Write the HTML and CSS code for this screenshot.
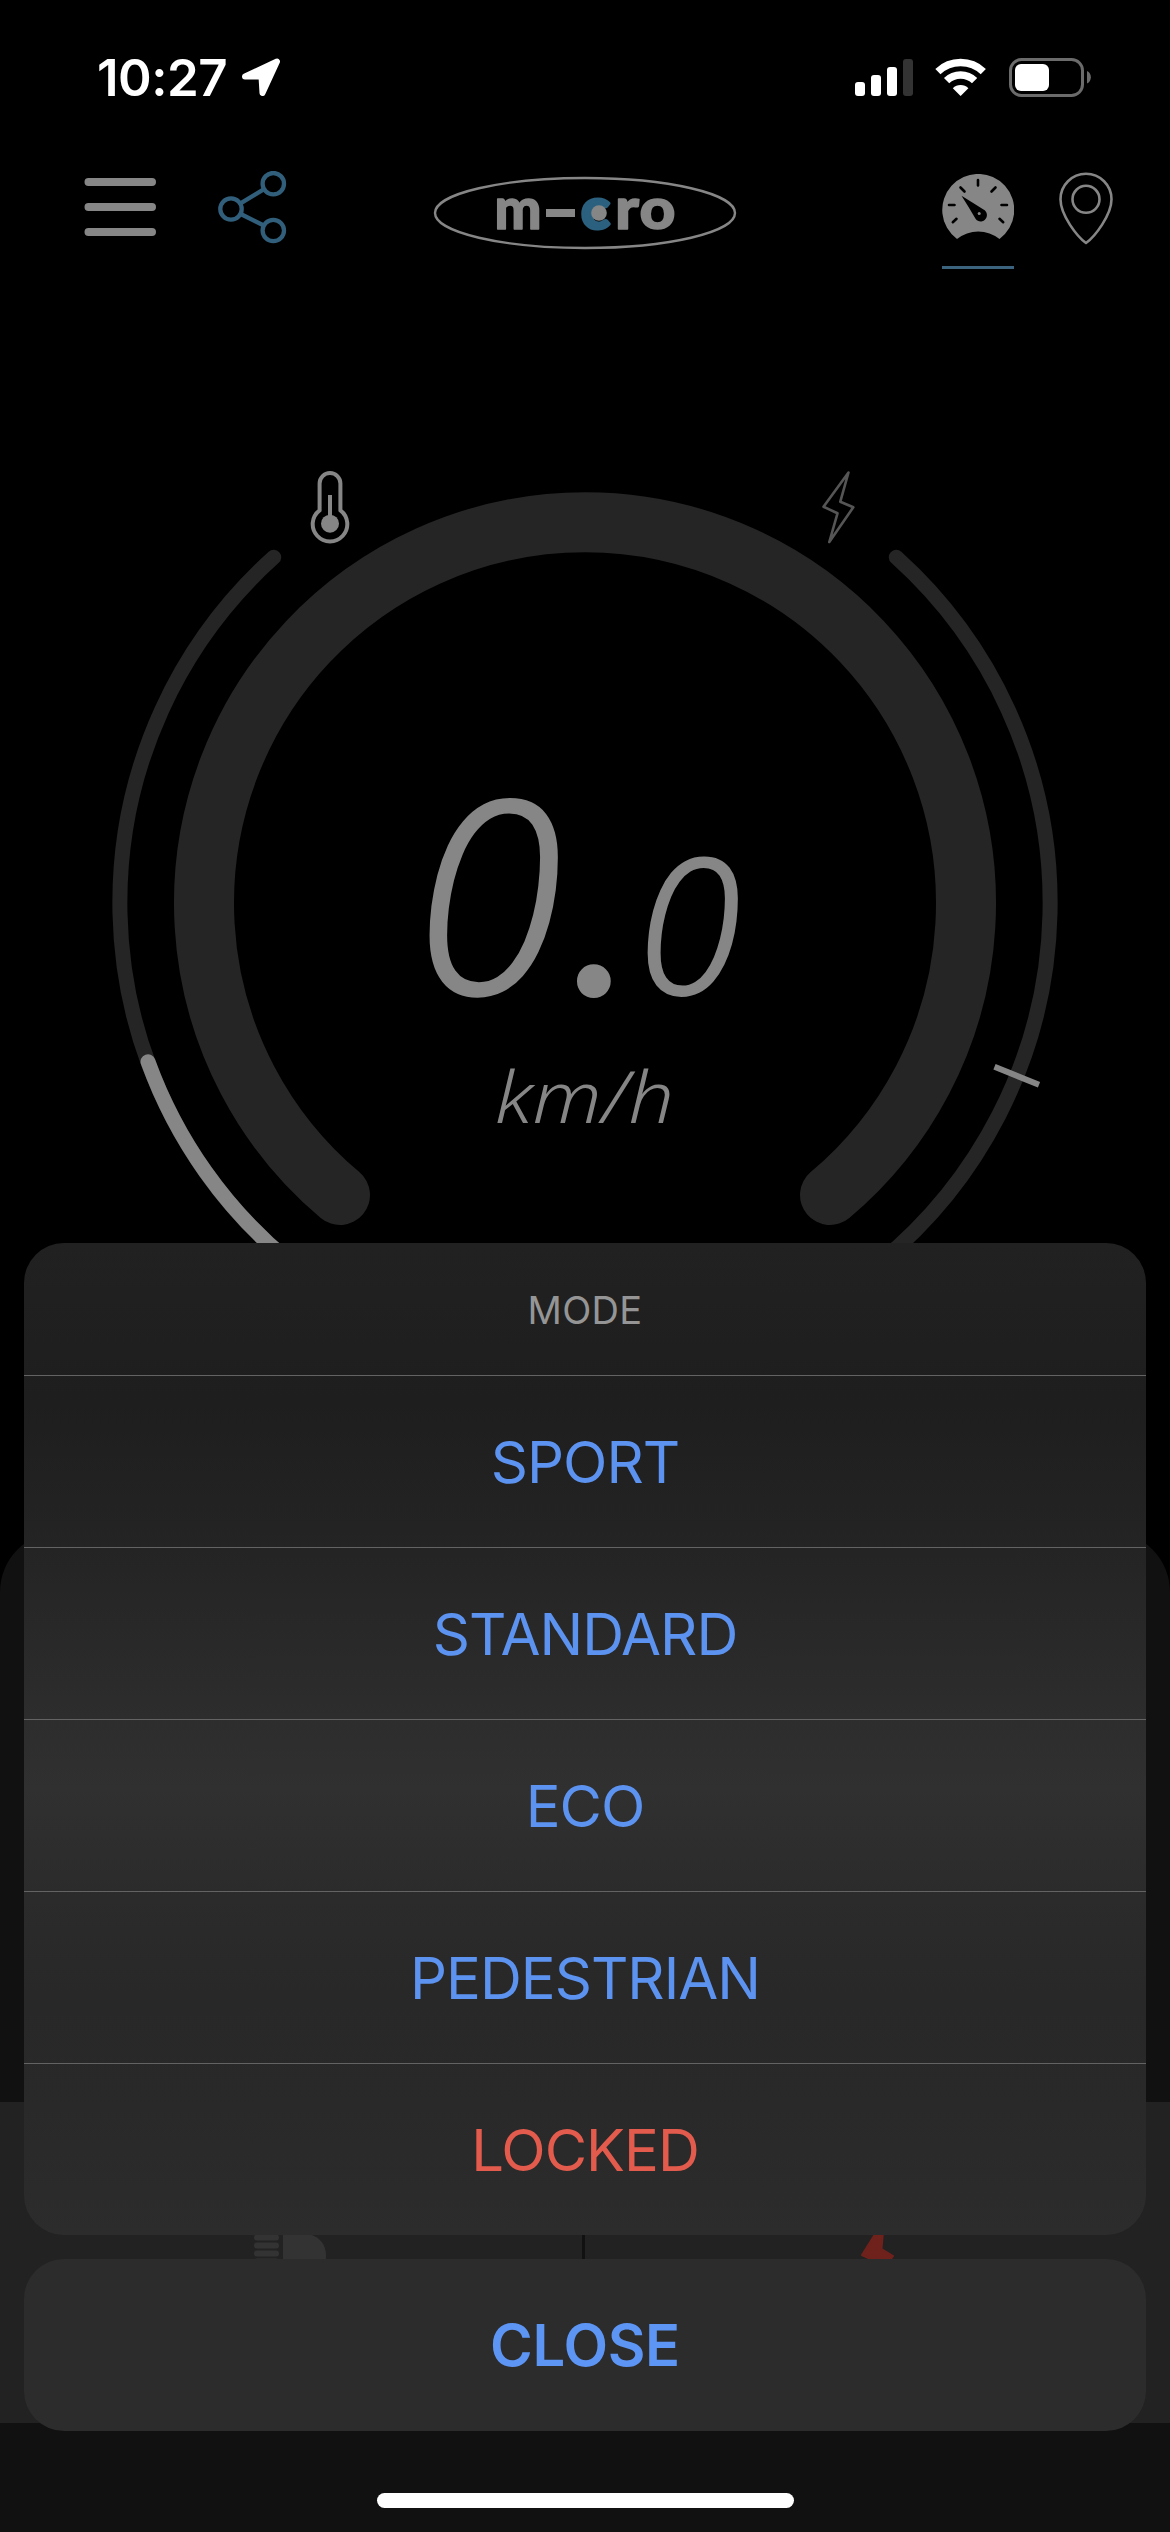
FILE: index.html
```html
<!DOCTYPE html>
<html lang="en">
<head>
<meta charset="UTF-8">
<meta name="viewport" content="width=device-width, initial-scale=1.0">
<title>micro - Mode</title>
<link rel="stylesheet" href="styles.css">
</head>
<body>

<div class="screen">
    <header class="status-bar">
        <div class="status-left">
            <span class="time">10:27</span>
            <svg class="location-arrow" width="40" height="40" viewBox="0 0 40 40">
                <path d="M4 18.500 L36 3.500 L21.500 35 L20.500 18.500 Z" fill="#fff" stroke="#fff" stroke-width="6" stroke-linejoin="round"/>
            </svg>
        </div>
        <div class="status-right">
            <svg width="58" height="40" viewBox="0 0 58 40">
                <g fill="#fff">
                    <rect x="0" y="24" width="10" height="14" rx="3"/>
                    <rect x="16" y="17" width="10" height="21" rx="3"/>
                    <rect x="32" y="9" width="10" height="29" rx="3"/>
                </g>
                <rect x="48" y="1" width="10" height="37" rx="3" fill="#333"/>
            </svg>
            <svg width="52" height="40" viewBox="0 0 52 40">
                <g fill="none" stroke="#fff" stroke-width="7.5">
                    <path d="M2.9 13.6 A33 33 0 0 1 48.3 13.6"/>
                    <path d="M11.6 22.6 A20 20 0 0 1 39.6 22.6"/>
                </g>
                <path d="M25.6 38 L17.8 30.2 A11 11 0 0 1 33.4 30.2 Z" fill="#fff"/>
            </svg>
            <svg width="82" height="40" viewBox="0 0 82 40">
                <rect x="1.5" y="1.5" width="72" height="36" rx="11" fill="none" stroke="#6b6b6b" stroke-width="3"/>
                <rect x="6" y="6" width="34" height="27" rx="6" fill="#fff"/>
                <path d="M78 13 A7 7 0 0 1 78 25.500 Z" fill="#6b6b6b"/>
            </svg>
        </div>
    </header>

    <nav class="top-bar">
        <svg class="menu-icon" width="72" height="60" viewBox="0 0 72 60">
            <path d="M4.500 5 H68 M4.500 30 H68 M4.500 55 H68" stroke="#868686" stroke-width="8" stroke-linecap="round"/>
        </svg>
        <svg class="share-icon" width="70" height="74" viewBox="0 0 70 74">
            <g fill="none" stroke="#315f7b" stroke-width="4.300">
                <circle cx="13" cy="38" r="10.700"/>
                <circle cx="55.300" cy="12.700" r="10.700"/>
                <circle cx="55.300" cy="59.500" r="10.700"/>
                <path d="M22.500 32.300 L46 18.200 M22.700 43 L45.800 54.500"/>
            </g>
        </svg>
        <svg class="logo" width="304" height="98" viewBox="0 -12 304 98">
            <ellipse cx="152" cy="37" rx="150" ry="35" fill="none" stroke="#868686" stroke-width="2.400"/>
            <g class="logo-text">
                <text x="61.500" y="52.500" textLength="47" lengthAdjust="spacingAndGlyphs">m</text>
                <text x="148" y="52.500" class="logo-blue" textLength="29" lengthAdjust="spacingAndGlyphs">c</text>
                <text x="182" y="52.500" textLength="24" lengthAdjust="spacingAndGlyphs">r</text>
                <text x="206.500" y="52.500" textLength="36" lengthAdjust="spacingAndGlyphs">o</text>
            </g>
            <rect x="113" y="33" width="29" height="8" fill="#868686"/>
            <circle cx="166" cy="37" r="7.800" fill="#868686"/>
        </svg>
        <div class="tab active">
            <svg width="72" height="66" viewBox="0 0 72 66">
                <path d="M15 65 A36 36 0 1 1 57.500 65 A34 34 0 0 0 15 65 Z" fill="#868686"/>
                <path d="M36 6 V11.500 M18.500 13.500 L22.500 17.500 M53.500 13.500 L49.500 17.500 M7 31 H12.500 M59.500 31 H65 M10.800 48.200 L14.500 44.800 M61.200 48.200 L57.500 44.800" stroke="#000" stroke-width="2.600" stroke-linecap="round"/>
                <path d="M19.500 21.800 Q31 29 41.500 35.500 A6.300 6.300 0 1 1 32.800 43.500 Q27 33.500 19.500 21.800 Z" fill="#000"/>
                <circle cx="37.200" cy="39.500" r="1.500" fill="#868686"/>
            </svg>
        </div>
        <svg class="pin-icon" width="56" height="74" viewBox="0 0 56 74">
            <g fill="none" stroke="#868686" stroke-width="2.600" stroke-linejoin="round">
                <path d="M28 71 C19 64.500 2.500 43 2.500 27.300 A25.500 25.500 0 0 1 53.500 27.300 C53.500 43 37 64.500 28 71 Z"/>
                <circle cx="28" cy="27.300" r="13.500"/>
            </g>
        </svg>
    </nav>

    <main class="dashboard">
        <svg class="gauge" width="1170" height="900" viewBox="0 400 1170 900">
            <!-- speed track -->
            <path d="M340 1195 A381 381 0 1 1 830 1195" class="track" stroke-width="60"/>
            <!-- temperature and battery tracks -->
            <path d="M290 1262.400 A465 465 0 0 1 273.700 557.300" class="track" stroke-width="15"/>
            <path d="M880 1262.400 A465 465 0 0 0 896.300 557.300" class="track" stroke-width="15"/>
            <path d="M290 1262.400 A465 465 0 0 1 148 1061.700" class="track level" stroke-width="15"/>
            <path d="M994.500 1066.700 L1039 1084.700" stroke="#868686" stroke-width="6"/>
            <!-- thermometer -->
            <g stroke="#868686" stroke-width="4" fill="none">
                <path d="M319.600 510.300 V483.400 A10.400 10.400 0 0 1 340.400 483.400 V510.300 A17.300 17.300 0 1 1 319.600 510.300 Z"/>
                <path d="M330 495 V520"/>
                <circle cx="330" cy="523.700" r="9" fill="#868686" stroke="none"/>
            </g>
            <!-- battery bolt -->
            <path d="M848.500 472.500 L823.500 506.700 L837.500 513.300 L829.300 542 L853.300 507.300 L840.300 501.700 Z" fill="none" stroke="#555" stroke-width="2.600" stroke-linejoin="round"/>
            <g class="speed">
                <text x="414" y="994" font-size="269" class="digit">0</text>
                <text x="570" y="996" font-size="270" class="point">.</text>
                <text x="637" y="994" font-size="188" class="digit">0</text>
                <text x="495" y="1123" font-size="72" textLength="179" lengthAdjust="spacingAndGlyphs">km/h</text>
            </g>
        </svg>
    </main>

    <section class="panel">
        <div class="quick-actions">
            <div class="action">
                <svg width="80" height="60" viewBox="0 0 80 60">
                    <path d="M6 3.500 H25 M6 11.500 H25 M6 19.500 H25 M6 27.500 H25 M6 35.500 H25" stroke="#333" stroke-width="6" stroke-linecap="round"/>
                    <path d="M32 0 H58 Q75 5 75 22 Q75 39 58 44 H32 Z" fill="#333"/>
                </svg>
            </div>
            <div class="action">
                <svg width="44" height="76" viewBox="0 0 44 76">
                    <path d="M28 1 L6 36 L20 42.500 L12 72 L37 37 L25.500 30 Z" fill="#6f211b" stroke="#6f211b" stroke-width="2" stroke-linejoin="round"/>
                </svg>
            </div>
        </div>
    </section>

    <div class="action-sheet">
        <div class="options">
            <div class="title">MODE</div>
            <button>SPORT</button>
            <button>STANDARD</button>
            <button>ECO</button>
            <button>PEDESTRIAN</button>
            <button class="danger">LOCKED</button>
        </div>
        <button class="close">CLOSE</button>
        <div class="home-indicator"></div>
    </div>
</div>

</body>
</html>
```
FILE: styles.css
```css
* {
    box-sizing: border-box;
}

body {
    margin: 0;
    background-color: #000;
    font-family: Inter, "Liberation Sans", sans-serif;
}

svg {
    display: block;
    flex-shrink: 0;
}

.screen {
    position: relative;
    display: flex;
    flex-direction: column;
    width: 1170px;
    height: 2532px;
    overflow: hidden;
    background-color: #000;
}

/* Status bar */
.status-bar {
    display: flex;
    justify-content: space-between;
    height: 150px;
    padding: 58px 79px 0 97px;
}

.status-left,
.status-right {
    display: flex;
    align-items: flex-start;
}

.status-right {
    gap: 22px;
}

.time {
    width: 143px;
    color: #fff;
    font-size: 51px;
    font-weight: 600;
    line-height: 40px;
    letter-spacing: -0.5px;
}

.location-arrow {
    margin-left: 1px;
}

/* Top bar */
.top-bar {
    display: flex;
    height: 150px;
    padding: 22px 56px 0 84px;
}

.menu-icon {
    margin-top: 5px;
}

.share-icon {
    margin-left: 62px;
    margin-top: -1px;
}

.logo {
    margin-left: 145px;
    margin-top: -8px;
}

.logo-text {
    font-family: Lato, sans-serif;
    font-weight: 900;
    font-size: 58px;
    fill: #868686;
    stroke: #868686;
    stroke-width: 1.5px;
    stroke-linejoin: round;
}

.logo-text .logo-blue {
    fill: #2b607f;
    stroke: #2b607f;
    stroke-width: 3px;
}

.tab {
    height: 97px;
    margin-left: 205px;
    padding-top: 2px;
}

.tab.active {
    border-bottom: 3px solid #3b637d;
}

.pin-icon {
    margin-left: 44px;
}

/* Gauge */
.dashboard {
    height: 1232px;
    padding-top: 100px;
}

.track {
    fill: none;
    stroke: #252525;
    stroke-linecap: round;
}

.track.level {
    stroke: #868686;
}

.speed {
    fill: #868686;
    font-family: "Noto Sans", sans-serif;
    font-style: italic;
    font-weight: 300;
}

.speed .digit {
    stroke: #868686;
    stroke-width: 2px;
}

.speed .point {
    font-family: Lato, sans-serif;
    font-weight: 400;
}

/* Bottom panel */
.panel {
    flex: 1;
    padding-top: 570px;
    border-radius: 60px 60px 0 0;
    background-color: #111;
}

.quick-actions {
    display: flex;
    height: 321px;
    background-color: #222;
}

.action {
    flex: 1;
    display: flex;
    justify-content: center;
    padding-top: 132px;
}

.action:first-child {
    flex: 0 0 585px;
    border-right: 3px solid #111;
}

.action:last-child {
    padding-top: 117px;
}

/* Action sheet */
.action-sheet {
    position: absolute;
    left: 24px;
    right: 24px;
    bottom: 24px;
}

.options {
    height: 992px;
    border-radius: 40px;
    overflow: hidden;
    background: linear-gradient(#212121, #1e1e1e 16%, #242424 31%, #2d2d2d 48%, #303030 55%, #2b2b2b 66%, #282828 76%, #292929 87%, #2c2c2c);
}

.title {
    height: 132px;
    color: #959595;
    font-size: 38px;
    line-height: 135px;
    letter-spacing: 0.3px;
    text-align: center;
}

.action-sheet button {
    display: block;
    width: 100%;
    height: 172px;
    padding: 0;
    border: none;
    border-top: 1px solid #636363;
    background: none;
    color: #5d93f0;
    font-family: inherit;
    font-size: 58px;
    letter-spacing: -1px;
}

.action-sheet .danger {
    color: #e35b4c;
}

.action-sheet .close {
    margin-top: 24px;
    border-top: none;
    border-radius: 40px;
    background-color: #2c2c2c;
    color: #5d95f5;
    font-weight: 600;
    letter-spacing: -0.3px;
}

.home-indicator {
    width: 417px;
    height: 15px;
    margin: 62px auto 0;
    border-radius: 8px;
    background-color: #fff;
}
```
